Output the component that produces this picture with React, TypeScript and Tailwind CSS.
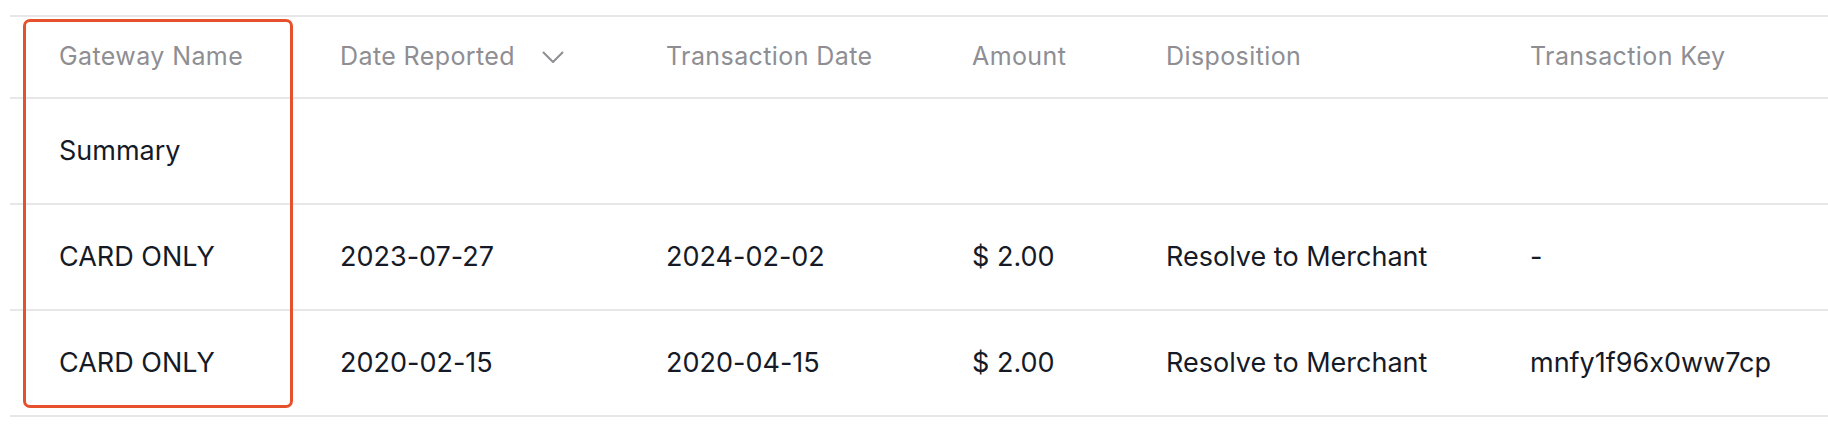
import React from "react";

const cols = "grid grid-cols-[281px_326px_306px_194px_364px_1fr]";

function ChevronDown() {
  return (
    <svg width="22" height="13" viewBox="0 0 22 13" fill="none" className="ml-[27px]">
      <path d="M1.5 1.5 L11 11 L20.5 1.5" stroke="#8e8e93" strokeWidth="2" strokeLinecap="round" strokeLinejoin="round" />
    </svg>
  );
}

const rows = [
  ["Summary", "", "", "", "", ""],
  ["CARD ONLY", "2023-07-27", "2024-02-02", "$ 2.00", "Resolve to Merchant", "-"],
  ["CARD ONLY", "2020-02-15", "2020-04-15", "$ 2.00", "Resolve to Merchant", "mnfy1f96x0ww7cp"],
];

export default function App() {
  return (
    <div className="relative w-[1828px] h-[430px] bg-white overflow-hidden pt-[15px] pl-[10px] font-['Inter',sans-serif] [font-feature-settings:'calt'_0]">
      <div className="w-[1840px] border-t-2 border-[#e7e7e9]">
        <div className={`${cols} h-[82px] border-b-2 border-[#e7e7e9] items-center text-[25px] tracking-[0.4px] text-[#8e8e93]`}>
          <div className="pl-[49px]">Gateway Name</div>
          <div className="pl-[49px] flex items-center">
            <span>Date Reported</span>
            <ChevronDown />
          </div>
          <div className="pl-[49px]">Transaction Date</div>
          <div className="pl-[49px]">Amount</div>
          <div className="pl-[49px]">Disposition</div>
          <div className="pl-[49px]">Transaction Key</div>
        </div>
        {rows.map((r, i) => (
          <div key={i} className={`${cols} h-[106px] border-b-2 border-[#e7e7e9] items-center text-[27px] text-[#151a26]`}>
            {r.map((c, j) => (
              <div key={j} className="pl-[49px]">{c}</div>
            ))}
          </div>
        ))}
      </div>
      <div className="absolute left-[23px] top-[19px] w-[270px] h-[389px] border-[3px] border-[#e6512d] rounded-[7px]" />
    </div>
  );
}
